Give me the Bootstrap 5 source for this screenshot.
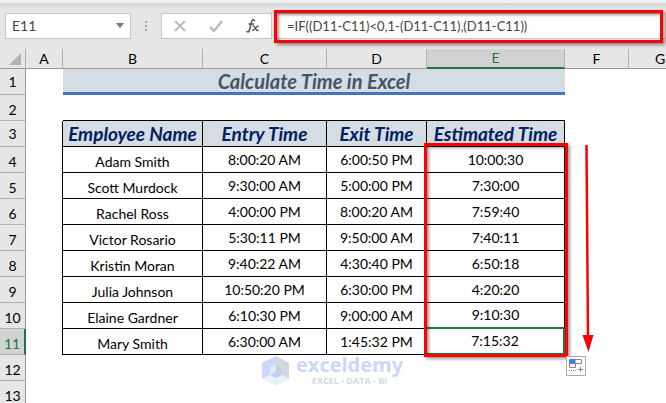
<!DOCTYPE html>
<html lang="en">
<head>
<meta charset="utf-8">
<meta name="viewport" content="width=device-width, initial-scale=1">
<title>Calculate Time in Excel</title>
<link href="https://cdn.jsdelivr.net/npm/bootstrap@5.3.0/dist/css/bootstrap.min.css" rel="stylesheet">
<style>
body{font-family:Lato,"Liberation Sans",sans-serif;font-size:14px;line-height:20px;color:#000;background:#fff}
.app{min-height:100vh}
.ribbon-edge{height:3px;background:#f2f0ee}
.formula-row{background:linear-gradient(#d2d2d2,#e6e6e6 6px);height:46px;padding:10px 0 11px 5px}
.bar-box{border:1px solid #c6c6c6;background:#fff;height:26px}
.name-box{width:126px}
.name-box input,.formula-input{border:0;background:transparent;color:#444;outline:0;min-width:0}
.name-box input{padding:0 0 0 6px}
.name-box button,.tool-box button{border:0;background:transparent;padding:0;line-height:0}
.grip{width:30px}
.tool-box{width:111px}
.formula-shell{position:relative;margin-left:2px}
.formula-input{padding:0 0 0 12px;font-size:13px}
.marker{position:absolute;border:3px solid #f00;pointer-events:none;box-shadow:2px 2px 3px #0006,inset 2px 2px 3px #0006}
.marker-formula{inset:-4px 2px -5px -1px}
.marker-result{left:424px;top:94px;width:144px;height:214px}
.sheet{position:relative}
.sheet-grid{table-layout:fixed;width:692px;border-collapse:separate;border-spacing:0}
.sheet-grid td,.sheet-grid th{padding:0;text-align:center;white-space:nowrap;font-weight:400;vertical-align:middle}
.sheet-grid thead th{height:20px;line-height:18px;background:#e6e6e6;border-right:1px solid #b0b0b0;border-bottom:1px solid #999}
.sheet-grid thead th.picked{background:#d2d2d2;color:#217346;border-bottom:2px solid #217346}
.sheet-grid tbody tr{height:26px}
.sheet-grid tbody th.num{background:#e6e6e6;border-right:1px solid #999;border-bottom:1px solid #b0b0b0;vertical-align:bottom}
.sheet-grid tbody th.num.mid{vertical-align:middle}
.sheet-grid tbody th.num.picked{background:#d2d2d2;color:#217346;border-right:2px solid #217346}
.sheet-grid .banner{background:#d6dce4;color:#44546a;border-bottom:3px solid #4472c4;font-size:20px;font-weight:700;font-style:italic}
.sheet-grid .cap{background:#d6dce4;color:#002060;font-size:19px;font-weight:700;font-style:italic}
.sheet-grid .cell{border-right:1px solid #000;border-bottom:1px solid #000}
.sheet-grid .top{border-bottom:1px solid #000}
.sheet-grid .side{border-right:1px solid #000}
.sheet-grid .who{vertical-align:bottom}
.sheet-grid .above{border-bottom:2px solid #217346}
.sheet-grid .active{border-right:2px solid #217346;border-bottom:2px solid #217346}
.arrow{position:absolute;left:580px;top:95px}
.fill-button{position:absolute;left:566px;top:307px;width:20px;height:20px;border:1px solid #ababab;background:#fff;padding:0;line-height:0}
.watermark{position:absolute;left:262px;top:306px;gap:6px}
.brand-name{font:700 20px/20px "Open Sans",sans-serif;color:#cad6fb}
.brand-tag{font:700 9px/12px "Open Sans",sans-serif;color:#d3d8dd}
</style>
<script src="https://cdn.jsdelivr.net/npm/bootstrap@5.3.0/dist/js/bootstrap.bundle.min.js"></script>
</head>
<body>
<main class="app overflow-hidden">
<div class="ribbon-edge"></div>
<div class="formula-row d-flex">
  <div class="bar-box name-box d-flex align-items-center flex-shrink-0">
    <input class="w-100" aria-label="Name box" value="E11">
    <button type="button" class="pe-1" aria-label="Choose a cell"><svg width="12" height="8"><path d="M2 1h8L6 6z" fill="#777"/></svg></button>
  </div>
  <div class="grip d-flex justify-content-center align-items-center flex-shrink-0"><svg width="2" height="12" fill="#a6a6a6"><path d="M0 1h2v2H0zM0 5h2v2H0zM0 9h2v2H0z"/></svg></div>
  <div class="bar-box tool-box d-flex align-items-center justify-content-around flex-shrink-0">
    <button type="button" aria-label="Cancel"><svg width="14" height="14" fill="none" stroke="#bcbcbc" stroke-width="2"><path d="M2 2l10 10M12 2L2 12"/></svg></button>
    <button type="button" aria-label="Enter"><svg width="14" height="14" fill="none" stroke="#bcbcbc" stroke-width="2.5"><path d="M1 8l4 4L13 2"/></svg></button>
    <button type="button" aria-label="Insert function"><svg width="14" height="16" fill="none" stroke="#555" stroke-linecap="round"><path d="M8.5 2.5C7 .8 5.9 2.2 5.5 4L3.5 12C3.1 13.9 2 14.3 1 13.5M3 6h4.500" stroke-width="1.5"/><path d="M7 8c2-.6 2 4.800 5 4.500M12.300 8C10.500 7.500 9 12.500 6.500 12.500" stroke-width="1.3"/></svg></button>
  </div>
  <div class="formula-shell bar-box flex-grow-1 d-flex">
    <input class="formula-input w-100" aria-label="Formula" value="=IF((D11-C11)&lt;0,1-(D11-C11),(D11-C11))">
    <div class="marker marker-formula"></div>
  </div>
</div>
<div class="sheet">
  <table class="sheet-grid">
    <colgroup><col style="width:26px"><col style="width:37px"><col style="width:140px"><col style="width:124px"><col style="width:100px"><col style="width:138px"><col style="width:64px"><col style="width:63px"></colgroup>
    <thead><tr><th><svg class="d-block ms-auto me-1" width="12" height="12"><path d="M12 0v12H0z" fill="#b1b1b1"/></svg></th><th>A</th><th>B</th><th>C</th><th>D</th><th class="picked">E</th><th>F</th><th>G</th></tr></thead>
    <tbody>
    <tr><th class="num mid">1</th><td></td><td class="banner" colspan="4">Calculate Time in Excel</td><td></td><td></td></tr>
    <tr><th class="num">2</th><td></td><td class="top"></td><td class="top"></td><td class="top"></td><td class="top"></td><td></td><td></td></tr>
    <tr><th class="num mid">3</th><td class="side"></td><th class="cell cap">Employee Name</th><th class="cell cap">Entry Time</th><th class="cell cap">Exit Time</th><th class="cell cap">Estimated Time</th><td></td><td></td></tr>
    <tr><th class="num">4</th><td class="side"></td><td class="cell who">Adam Smith</td><td class="cell">8:00:20 AM</td><td class="cell">6:00:50 PM</td><td class="cell">10:00:30</td><td></td><td></td></tr>
    <tr><th class="num">5</th><td class="side"></td><td class="cell who">Scott Murdock</td><td class="cell">9:30:00 AM</td><td class="cell">5:00:00 PM</td><td class="cell">7:30:00</td><td></td><td></td></tr>
    <tr><th class="num">6</th><td class="side"></td><td class="cell who">Rachel Ross</td><td class="cell">4:00:00 PM</td><td class="cell">8:00:20 AM</td><td class="cell">7:59:40</td><td></td><td></td></tr>
    <tr><th class="num">7</th><td class="side"></td><td class="cell who">Victor Rosario</td><td class="cell">5:30:11 PM</td><td class="cell">9:50:00 AM</td><td class="cell">7:40:11</td><td></td><td></td></tr>
    <tr><th class="num">8</th><td class="side"></td><td class="cell who">Kristin Moran</td><td class="cell">9:40:22 AM</td><td class="cell">4:30:40 PM</td><td class="cell">6:50:18</td><td></td><td></td></tr>
    <tr><th class="num">9</th><td class="side"></td><td class="cell who">Julia Johnson</td><td class="cell">10:50:20 PM</td><td class="cell">6:30:00 PM</td><td class="cell">4:20:20</td><td></td><td></td></tr>
    <tr><th class="num">10</th><td class="side"></td><td class="cell who">Elaine Gardner</td><td class="cell">6:10:30 PM</td><td class="cell">9:00:00 AM</td><td class="cell above">9:10:30</td><td></td><td></td></tr>
    <tr><th class="num picked">11</th><td class="side"></td><td class="cell who">Mary Smith</td><td class="cell">6:30:00 AM</td><td class="cell">1:45:32 PM</td><td class="cell active">7:15:32</td><td></td><td></td></tr>
    <tr><th class="num">12</th><td></td><td></td><td></td><td></td><td></td><td></td><td></td></tr>
    <tr><th class="num">13</th><td></td><td></td><td></td><td></td><td></td><td></td><td></td></tr>
    </tbody>
  </table>
  <div class="marker marker-result"></div>
  <svg class="arrow" width="16" height="210"><path d="M6.5 1L8 194" stroke="#f00" stroke-width="2.5"/><path d="M2.5 191h11L8.5 208z" fill="#f00"/></svg>
  <button type="button" class="fill-button" aria-label="Auto fill options"><svg width="18" height="18" fill="none" stroke="#888"><path d="M2.5 2.5h12v4h-12zM2.5 6.5h6v4h-6z"/><path d="M3 3h5v3H3z" fill="#3b7cf0" stroke="#3b7cf0"/><path d="M2 13.5h8" stroke-dasharray="1 1"/><path d="M11 12.5h5M13.5 10v5"/></svg></button>
  <div class="watermark d-flex">
    <svg width="28" height="34"><path d="M14 1L0 8v16l8-4v-7l6-3z" fill="#cbd7fb"/><path d="M14 1l13 7v16l-7-4v-7l-6-3z" fill="#d3d8df"/><path d="M0 24l8-4 6 3 6-3 7 4-13 7z" fill="#e8f2f8"/><path d="M14 10l6 3v7l-6-4z" fill="#c6cdd7"/><path d="M14 10l-6 3v7l6-4z" fill="#e4eaf5"/><path d="M8 20l6-4 6 4-6 3z" fill="#bdcdfb"/></svg>
    <div class="text-center"><div class="brand-name">exceldemy</div><div class="brand-tag">EXCEL - DATA - BI</div></div>
  </div>
</div>
</main>
</body>
</html>
